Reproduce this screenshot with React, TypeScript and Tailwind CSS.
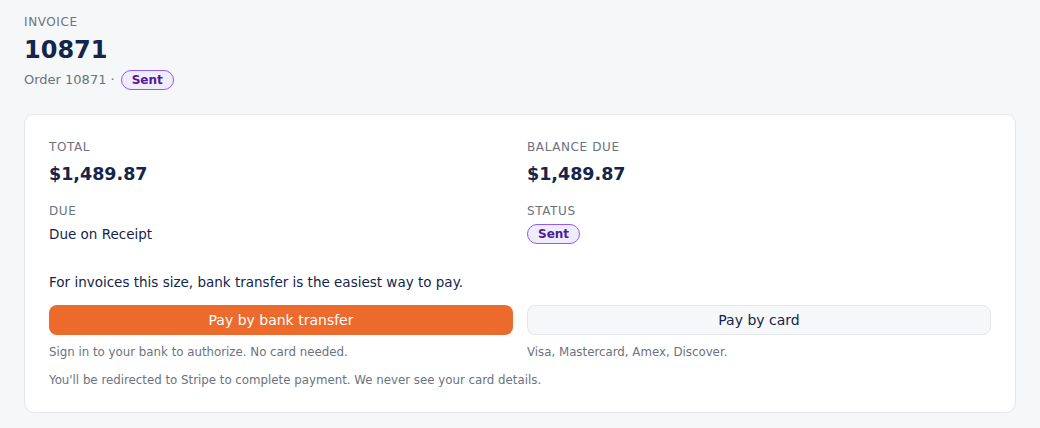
import React from 'react';

const font = { fontFamily: '"DejaVu Sans", "Open Sans", sans-serif' };

const Badge: React.FC<{ label: string }> = ({ label }) => (
  <span className="inline-flex items-center h-[20px] px-[10px] rounded-full border border-[#8b5cf6] bg-[#f1ebfe] text-[#4c1d95] text-[12px] font-semibold leading-none">
    {label}
  </span>
);

const Stat: React.FC<{ label: string; gap: string; children: React.ReactNode }> = ({ label, gap, children }) => (
  <div>
    <p className="text-[12px] uppercase tracking-[0.05em] text-[#6b7280] leading-[16px]">{label}</p>
    <div className={gap}>{children}</div>
  </div>
);

export default function App() {
  return (
    <div className="min-h-screen bg-[#f6f7f9] px-[24px] pt-[14px] pb-[16px] text-[#14254a]" style={font}>
      {/* Header */}
      <p className="text-[12px] uppercase tracking-[0.05em] text-[#6b7280] leading-[16px]">Invoice</p>
      <h1 className="text-[24px] font-bold leading-[30px] mt-[5px] text-[#13254b]">10871</h1>
      <div className="flex items-center gap-[6px] mt-[5px] text-[13px] text-[#6b7280]">
        <span>Order 10871 ·</span>
        <Badge label="Sent" />
      </div>

      {/* Card */}
      <div className="mt-[24px] bg-white border border-[#e5e7eb] rounded-[10px] px-[24px] pt-[24px] pb-[24px]">
        <div className="grid grid-cols-2 gap-x-[14px] gap-y-[18px]">
          <Stat label="Total" gap="mt-[8px]">
            <p className="text-[17.5px] font-bold leading-[22px]">$1,489.87</p>
          </Stat>
          <Stat label="Balance due" gap="mt-[8px]">
            <p className="text-[17.5px] font-bold leading-[22px]">$1,489.87</p>
          </Stat>
          <Stat label="Due" gap="mt-[5px]">
            <p className="text-[13.5px] leading-[20px]">Due on Receipt</p>
          </Stat>
          <Stat label="Status" gap="mt-[5px] flex">
            <Badge label="Sent" />
          </Stat>
        </div>

        <p className="mt-[28px] text-[13.5px] leading-[20px]">For invoices this size, bank transfer is the easiest way to pay.</p>

        <div className="grid grid-cols-2 gap-x-[14px] mt-[13px]">
          <div>
            <button className="w-full h-[30px] rounded-[8px] bg-[#ec6a2c] text-white text-[14px] font-medium">
              Pay by bank transfer
            </button>
            <p className="mt-[9px] text-[11.8px] text-[#6b7280] leading-[16px]">Sign in to your bank to authorize. No card needed.</p>
          </div>
          <div>
            <button className="w-full h-[30px] rounded-[8px] bg-[#f6f7f9] border border-[#e5e7eb] text-[#13254b] text-[14px] font-medium">
              Pay by card
            </button>
            <p className="mt-[9px] text-[11.8px] text-[#6b7280] leading-[16px]">Visa, Mastercard, Amex, Discover.</p>
          </div>
        </div>

        <p className="mt-[12px] text-[11.8px] text-[#6b7280] leading-[16px]">
          You'll be redirected to Stripe to complete payment. We never see your card details.
        </p>
      </div>
    </div>
  );
}
